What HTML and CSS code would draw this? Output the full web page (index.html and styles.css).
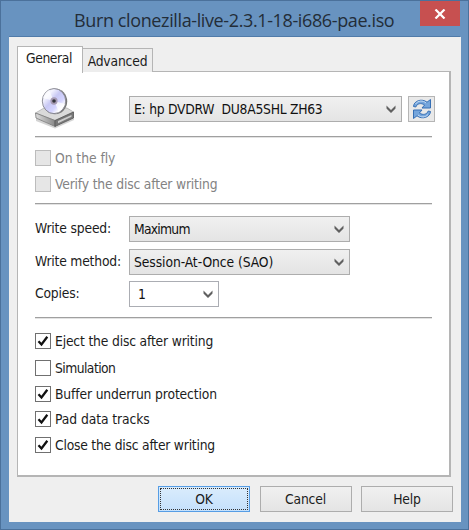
FILE: index.html
```
<!DOCTYPE html>
<html lang="en">
<head>
<meta charset="utf-8">
<title>Burn clonezilla-live-2.3.1-18-i686-pae.iso</title>
<link rel="stylesheet" href="styles.css">
</head>
<body>
<svg width="0" height="0" class="defs">
  <symbol id="chev" viewBox="0 0 10 8"><path d="M.5 .5 5 5 9.500 .5V3.500L5 8 .5 3.500Z" fill="#606060"/></symbol>
  <symbol id="tick" viewBox="0 0 12 12"><path d="M1.500 6.200 4.500 9.500 10.300 1.800" fill="none" stroke="#111" stroke-width="2.300"/></symbol>
</svg>
<div class="window">
  <header class="titlebar">
    <h1 class="title">Burn clonezilla-live-2.3.1-18-i686-pae.iso</h1>
    <button class="close" aria-label="Close"><svg width="12" height="10" viewBox="0 0 12 10"><path d="M1.500 .5 10.500 9.500M10.500 .5 1.500 9.500" stroke="#fff" stroke-width="2.200"/></svg></button>
  </header>
  <main class="client">
    <nav class="tabs">
      <span class="tab active"><span class="t-general">General</span></span>
      <span class="tab"><span class="t-advanced">Advanced</span></span>
    </nav>
    <section class="panel">
      <div class="device">
        <svg class="drive" width="42" height="42" viewBox="0 0 42 42">
          <defs>
            <linearGradient id="disc" x1="0" y1="0" x2="1" y2="1"><stop offset="0" stop-color="#dcdce8"/><stop offset=".25" stop-color="#f4f4ff"/><stop offset=".45" stop-color="#c8c8f4"/><stop offset=".65" stop-color="#d4d4ff"/><stop offset=".8" stop-color="#fff"/><stop offset="1" stop-color="#c8c8ec"/></linearGradient>
            <linearGradient id="front"><stop offset="0" stop-color="#dedede"/><stop offset="1" stop-color="#888"/></linearGradient>
          </defs>
          <path d="M2 31 21 40 40 31V33L21 41.500 2 34Z" fill="#aaa" opacity=".5"/>
          <path d="M1.500 26 10 21H33L39.500 25 21 33.500Z" fill="#dadada" stroke="#aaa" stroke-width=".7"/>
          <path d="M1.500 26 21 33.500V39.500L2 31Z" fill="url(#front)" stroke="#777" stroke-width=".8"/>
          <path d="M21 33.500 39.500 25V31L21 39.500Z" fill="#787878" stroke="#555" stroke-width=".8"/>
          <path d="M24 34 37.500 28V29.800L24 36.200Z" fill="#ccc"/>
          <ellipse cx="21" cy="14.300" rx="12.200" ry="12.900" fill="#777"/>
          <ellipse cx="20" cy="14.100" rx="11.700" ry="12.500" fill="url(#disc)" stroke="#85858f" stroke-width=".9"/>
          <path d="M20 14 9 11Q11 5 15 3Z" fill="#fff" opacity=".7"/>
          <path d="M20 14 31 17Q29 22 25 25Z" fill="#fff" opacity=".75"/>
          <ellipse cx="20" cy="14" rx="3.600" ry="3.700" fill="#a69bb4"/>
          <circle cx="20" cy="14" r="1.800" fill="#34343c"/>
        </svg>
        <div class="select wide"><span class="t-device">E: hp DVDRW&nbsp; DU8A5SHL ZH63</span><svg class="chev"><use href="#chev"/></svg></div>
        <button class="refresh" aria-label="Refresh"><svg width="20" height="22" viewBox="0 0 20 22">
          <path id="arrow" d="M1.500 8.500C2 2.500 10 .2 15 4.200L18.500 1.500V10H10L12.600 7C9 4.500 5 5.500 3.800 9Z" fill="#74a5dc" stroke="#356fb5" stroke-width="1"/>
          <use href="#arrow" transform="rotate(180 10 11)"/>
          <path d="M3.500 6C6 2.500 11 2 14 5" fill="none" stroke="#c5dcf5" stroke-width="1"/>
          <path d="M16 16.500C13 19.800 9 19.500 6 17" fill="none" stroke="#c5dcf5" stroke-width="1"/>
        </svg></button>
      </div>
      <hr>
      <div class="group disabled">
        <label class="check r1"><i class="box"></i><span class="t-fly">On the fly</span></label>
        <label class="check r2"><i class="box"></i><span class="t-verify">Verify the disc after writing</span></label>
      </div>
      <hr>
      <div class="form">
        <span class="label t-speed">Write speed:</span><div class="select"><span class="t-max">Maximum</span><svg class="chev"><use href="#chev"/></svg></div>
        <span class="label t-method">Write method:</span><div class="select"><span class="t-session">Session-At-Once (SAO)</span><svg class="chev"><use href="#chev"/></svg></div>
        <span class="label t-copies">Copies:</span><div class="select edit"><span>1</span><svg class="chev"><use href="#chev"/></svg></div>
      </div>
      <hr class="last">
      <div class="options">
        <label class="check"><i class="box"><svg><use href="#tick"/></svg></i><span class="t-eject">Eject the disc after writing</span></label>
        <label class="check"><i class="box"></i><span class="t-sim">Simulation</span></label>
        <label class="check"><i class="box"><svg><use href="#tick"/></svg></i><span class="t-buffer">Buffer underrun protection</span></label>
        <label class="check"><i class="box"><svg><use href="#tick"/></svg></i><span class="t-pad">Pad data tracks</span></label>
        <label class="check"><i class="box"><svg><use href="#tick"/></svg></i><span class="t-closed">Close the disc after writing</span></label>
      </div>
    </section>
    <footer class="buttons">
      <button class="btn primary"><span>OK</span></button>
      <button class="btn"><span>Cancel</span></button>
      <button class="btn"><span>Help</span></button>
    </footer>
  </main>
</div>
</body>
</html>
```
FILE: styles.css
```
* { box-sizing: border-box; }
body { margin: 0; overflow: hidden; font: 13.75px/18px "DejaVu Sans Condensed", "DejaVu Sans", sans-serif; font-stretch: condensed; letter-spacing: -.17px; color: #1c1c1c; }
.defs { position: absolute; }
.window { width: 469px; height: 530px; background: #6893c0; border: 1px solid #4b719b; padding: 0 8px; display: flex; flex-direction: column; }
.titlebar { height: 36px; flex: none; display: flex; align-items: flex-start; border-bottom: 1px solid #507ba9; }
.title { margin: 6px 0 0 65px; font: 18px/26px "Open Sans", sans-serif; letter-spacing: -.38px; white-space: nowrap; flex: 1; color: #232d38; }
.close { width: 40px; height: 25px; padding: 0; margin: 0; border: 0; background: #c75050; display: flex; align-items: center; justify-content: center; }
.client { height: 485px; width: 452px; background: #efefef; padding: 9px 8px 0; }
.tabs { display: flex; align-items: flex-end; height: 26px; }
.tab { height: 24px; width: 70px; background: #ededed; border: 1px solid #b5b5b5; border-left: 0; border-bottom: 0; display: flex; align-items: center; justify-content: center; white-space: nowrap; }
.tab.active { width: 66px; background: #fff; border-left: 1px solid #b5b5b5; margin-bottom: -1px; height: 27px; padding: 0 2px 4px 0; position: relative; }
.panel { width: 434px; height: 406px; border: 1px solid #b5b5b5; border-right-width: 2px; border-bottom-width: 2px; background: #fff; padding: 14px 17px 0; margin-top: -1px; }
.device { display: flex; height: 50px; padding-top: 10px; }
.drive { margin: -9px 53px 0 -1px; flex: none; }
.select { width: 221px; height: 26px; flex: none; border: 1px solid #adadad; background: linear-gradient(#f0f0f0, #e4e4e4); display: flex; align-items: center; justify-content: space-between; padding: 0 5px 0 4px; white-space: nowrap; color: #111; }
.wide { width: 273px; }
.edit { width: 90px; background: #fff; padding-left: 8px; border-color: #abadb3; }
.chev { width: 10px; height: 8px; flex: none; }
.refresh { width: 27px; height: 26px; flex: none; margin: 0 0 0 6px; padding: 0; border: 1px solid #b5b5b5; background: #e9e9e9; display: flex; align-items: center; justify-content: center; }
hr { width: 397px; height: 2px; margin: 0; border: 0; border-top: 1px solid #a0a0a0; border-bottom: 1px solid #e3e3e3; }
.group { height: 65px; padding-top: 12px; }
.check { display: flex; align-items: center; height: 16px; white-space: nowrap; }
.check span { margin-left: 4px; }
.r2 { margin-top: 10px; }
.box { width: 16px; height: 16px; border: 1px solid #707070; background: #fff; display: flex; align-items: center; justify-content: center; }
.box svg { width: 12px; height: 12px; }
.disabled { color: #838383; }
.disabled .box { border-color: #bcbcbc; background: #e6e6e6; }
.form { display: grid; grid-template-columns: 94px 221px; grid-template-rows: 26px 26px 26px; row-gap: 6.500px; padding-top: 11px; height: 112px; }
.label { align-self: center; white-space: nowrap; position: relative; top: -1px; }
.options { padding-top: 14px; display: grid; grid-template-rows: 27px 26px 25px 26px 16px; }
.buttons { display: flex; justify-content: flex-end; gap: 9.5px; margin-top: 9px; }
.btn { width: 92px; height: 26px; border: 1px solid #adadad; background: linear-gradient(#f0f0f0, #e4e4e4); padding: 1px; font: inherit; letter-spacing: inherit; color: #1c1c1c; }
.btn span { display: block; line-height: 20px; border: 1px solid transparent; }
.primary { border: 1px solid #569de5; background: linear-gradient(#daecfc, #c4e0fc); }
.primary span { border: 1px dotted #333; }
.t-general { letter-spacing: -.38px; }
.t-device { letter-spacing: -.26px; }
.t-fly { letter-spacing: -.05px; }
.t-method { letter-spacing: -.2px; }
.t-max { letter-spacing: -.75px; }
.t-session { letter-spacing: -.08px; }
.t-sim { letter-spacing: -.55px; }
.t-buffer { letter-spacing: -.14px; }
.t-pad { letter-spacing: -.08px; }
.t-closed { letter-spacing: -.22px; }
```
